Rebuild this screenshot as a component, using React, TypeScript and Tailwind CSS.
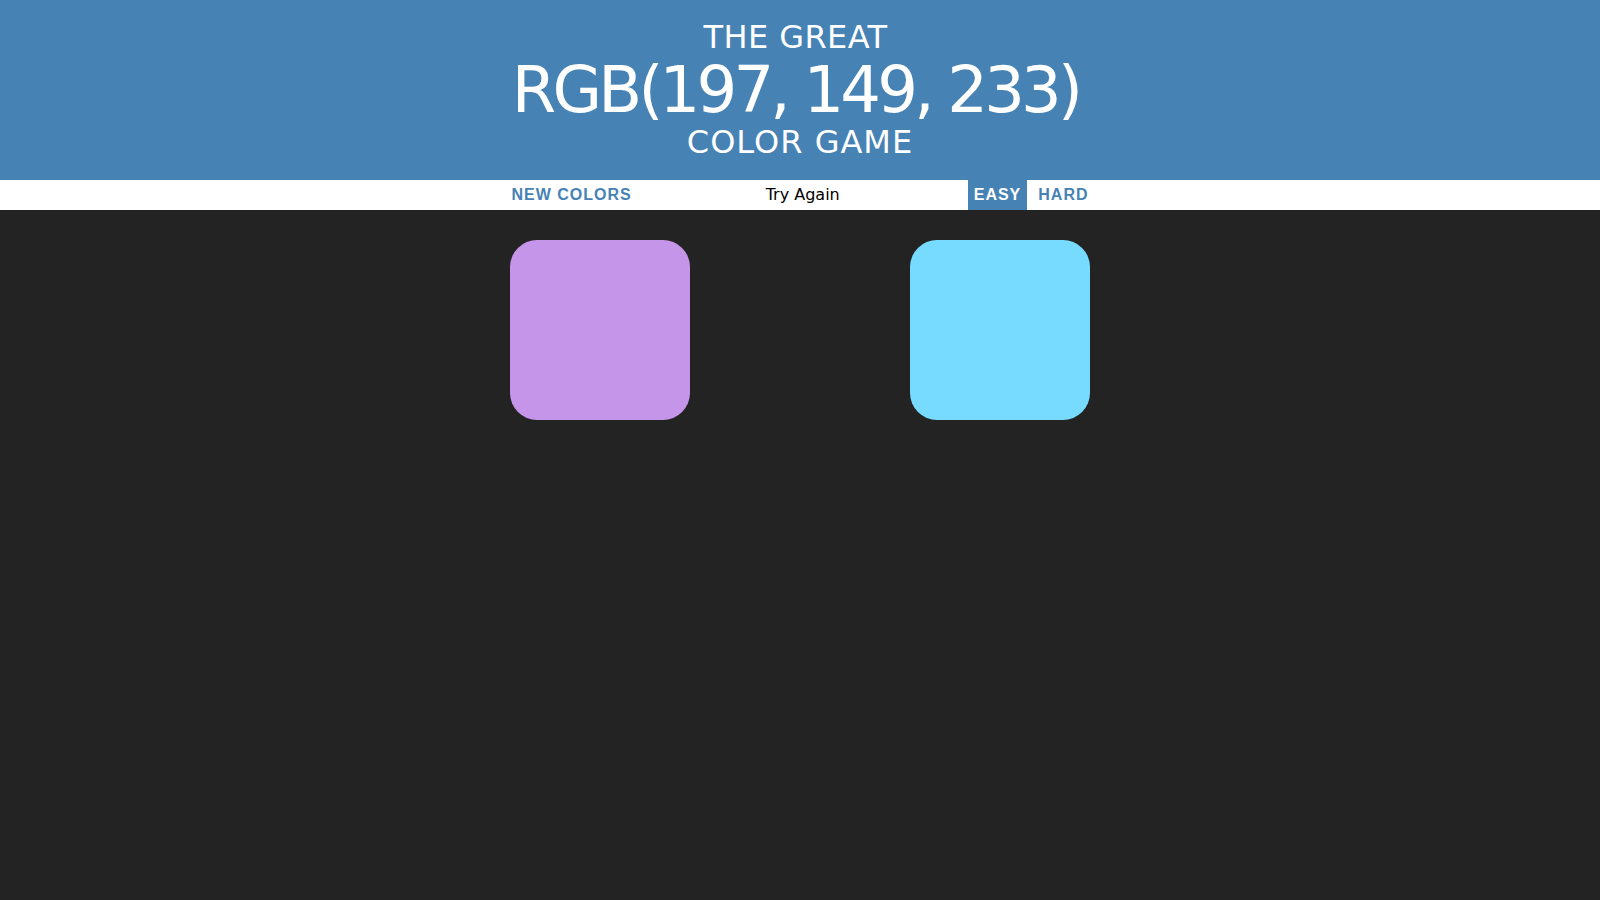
import { useState } from "react";

const squares = ["rgb(197, 149, 233)", "#232323", "rgb(118, 219, 254)"];

export default function App() {
  const [mode, setMode] = useState<"easy" | "hard">("easy");

  return (
    <div className="min-h-screen bg-[#232323] font-['DejaVu_Sans',sans-serif]">
      <h1 className="flex h-[180px] flex-col items-center bg-[#4682b4] py-[20px] text-center text-[32px] font-normal uppercase leading-[1.1] text-white">
        <span className="block h-[35px] pr-[9px] tracking-[0.4px]">The Great</span>
        <span className="block h-[70px] pr-[9px] text-[64px] leading-[70px] tracking-[-3.8px]">
          RGB(197, 149, 233)
        </span>
        <span className="block h-[35px] tracking-[1px]">Color Game</span>
      </h1>

      <div className="flex h-[30px] justify-center gap-[5px] bg-white">
        <button className="h-full px-[6px] font-['Liberation_Sans',sans-serif] text-[16px] font-bold uppercase tracking-[1px] text-[#4682b4] hover:bg-[#4682b4] hover:text-white">
          New Colors
        </button>
        <span className="flex w-[320px] items-center justify-center text-[16px] text-black">
          Try Again
        </span>
        <button
          onClick={() => setMode("easy")}
          className={
            mode === "easy"
              ? "h-full px-[6px] font-['Liberation_Sans',sans-serif] text-[16px] font-bold uppercase tracking-[1px] bg-[#4682b4] text-white"
              : "h-full px-[6px] font-['Liberation_Sans',sans-serif] text-[16px] font-bold uppercase tracking-[1px] text-[#4682b4]"
          }
        >
          Easy
        </button>
        <button
          onClick={() => setMode("hard")}
          className={
            mode === "hard"
              ? "h-full px-[6px] font-['Liberation_Sans',sans-serif] text-[16px] font-bold uppercase tracking-[1px] bg-[#4682b4] text-white"
              : "h-full px-[6px] font-['Liberation_Sans',sans-serif] text-[16px] font-bold uppercase tracking-[1px] text-[#4682b4]"
          }
        >
          Hard
        </button>
      </div>

      <div className="mx-auto mt-[20px] flex max-w-[600px] flex-wrap">
        {squares.map((color, i) => (
          <div
            key={i}
            className="m-[10px] h-[180px] w-[180px] rounded-[15%]"
            style={{ backgroundColor: color }}
          />
        ))}
      </div>
    </div>
  );
}
